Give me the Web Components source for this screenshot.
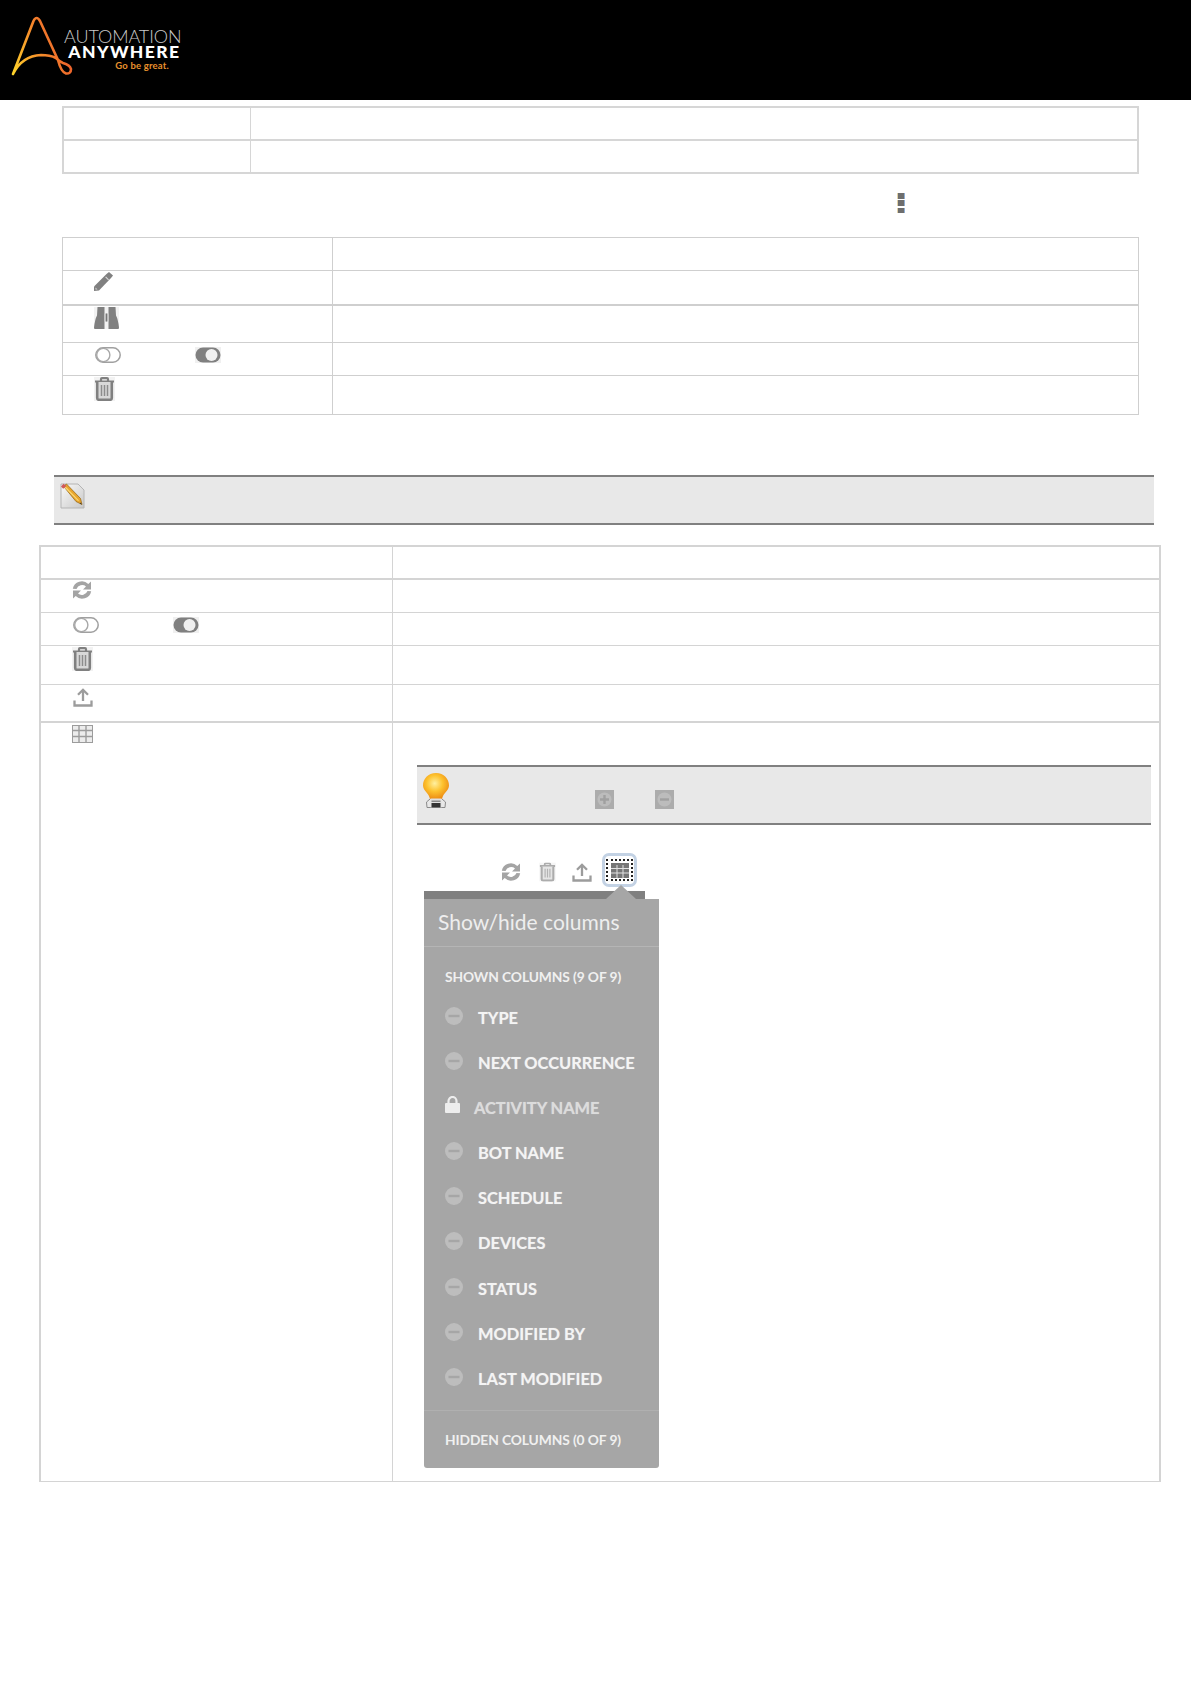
<!DOCTYPE html>
<html>
<head>
<meta charset="utf-8">
<title>Automation Anywhere</title>
<style>
  html, body { margin: 0; background: #fff; }
  body { font-family: Lato, "Liberation Sans", sans-serif; min-height: 1684px; }
</style>
</head>
<body>
<aa-header></aa-header>

<doc-table style="--col:187px;--mt:6px;--ml:62px;--w:1077px;--bw:2px;--bc:#d6d6d6">
  <doc-row h="33" b="2"></doc-row>
  <doc-row h="33" b="2"></doc-row>
</doc-table>

<menu-line></menu-line>

<doc-table style="--col:270px;--mt:0px;--ml:62px;--w:1077px;--bw:1px;--bc:#cfcfcf">
  <doc-row h="33"></doc-row>
  <doc-row h="35" b="2" pt="1"><tool-icon name="pencil"></tool-icon></doc-row>
  <doc-row h="37" pt="1"><tool-icon name="binoculars"></tool-icon></doc-row>
  <doc-row h="33" pt="4" pl="32"><tool-icon name="toggle-off"></tool-icon><tool-icon name="toggle-on"></tool-icon></doc-row>
  <doc-row h="39" pt="1"><tool-icon name="trash"></tool-icon></doc-row>
</doc-table>

<note-bar style="--mt:60px;--ml:54px;--w:1100px;--h:50px"><tool-icon name="note"></tool-icon></note-bar>

<doc-table style="--col:352px;--mt:20px;--ml:39px;--w:1122px;--bw:2px;--bc:#d4d4d4">
  <doc-row h="33" b="2"></doc-row>
  <doc-row h="33"><tool-icon name="refresh"></tool-icon></doc-row>
  <doc-row h="33" pt="4" pl="32"><tool-icon name="toggle-off"></tool-icon><tool-icon name="toggle-on"></tool-icon></doc-row>
  <doc-row h="39" pt="1"><tool-icon name="trash"></tool-icon></doc-row>
  <doc-row h="38" b="2" pt="3" pl="32"><tool-icon name="upload"></tool-icon></doc-row>
  <doc-row h="759" pt="2">
    <tool-icon name="grid"></tool-icon>
    <div slot="detail">
      <note-bar style="--mt:42px;--ml:24px;--w:734px;--h:60px">
        <tool-icon name="bulb"></tool-icon>
        <tool-icon name="plus-box" style="position:absolute;left:178px;top:23px"></tool-icon>
        <tool-icon name="minus-box" style="position:absolute;left:238px;top:23px"></tool-icon>
      </note-bar>
      <column-shot>
        <column-item>TYPE</column-item>
        <column-item>NEXT OCCURRENCE</column-item>
        <column-item locked>ACTIVITY NAME</column-item>
        <column-item>BOT NAME</column-item>
        <column-item>SCHEDULE</column-item>
        <column-item>DEVICES</column-item>
        <column-item>STATUS</column-item>
        <column-item>MODIFIED BY</column-item>
        <column-item>LAST MODIFIED</column-item>
      </column-shot>
    </div>
  </doc-row>
</doc-table>

<script>
// icons, keyed by name, each one carries its own size
const ICONS = {
  pencil: `<svg width="19" height="19" viewBox="0 0 19 19"><path fill="#808080" d="M0 19V14.5L12.5 2 15 0l4 3.5-2 2.5L5 18.5z"/><path fill="#d8d8d8" d="M1.5 17.5v-2l2 2zM12 4.5l3 3-.8.8-3-3z"/></svg>`,
  binoculars: `<svg width="25" height="22" viewBox="0 0 25 22"><rect width="25" height="22" fill="#f2f2f2"/><path fill="#808080" d="M3.5 0H10.5V22H1Q0 22 0 20.5 1 12 3 8.5zM21.5 0H14.5V22H24Q25 22 25 20.5 24 12 22 8.5z"/><rect x="10.5" y="6.5" width="4" height="8" fill="#cfcfcf"/><rect x="11.8" y="6.5" width="1.4" height="8" fill="#777"/></svg>`,
  "toggle-off": `<svg width="26" height="16" viewBox="0 0 26 16"><rect x=".8" y=".8" width="24.4" height="14.4" rx="7.2" fill="#fff" stroke="#a0a0a0" stroke-width="1.5"/><circle cx="8.3" cy="8" r="6.6" fill="#fff" stroke="#a8a8a8" stroke-width="1.4"/></svg>`,
  "toggle-on": `<svg width="26" height="16" viewBox="0 0 26 16"><rect width="26" height="16" fill="#f0f0f0"/><rect x=".5" y=".5" width="25" height="15" rx="7.5" fill="#808080"/><circle cx="16.5" cy="8" r="6" fill="#f0f0f0"/></svg>`,
  trash: `<svg width="21" height="24" viewBox="0 0 21 24"><rect width="21" height="24" fill="#f2f2f2"/><g fill="none" stroke="#808080"><path stroke-width="2.2" d="M1 4.5h19M7 4.5V2.2q0-1 1-1h5q1 0 1 1v2.3"/><path stroke-width="2.6" fill="#d8d8d8" d="M3.2 5v16q0 1.8 1.8 1.8h11q1.8 0 1.8-1.8V5"/><path stroke-width="1.5" stroke="#8c8c8c" d="M7.5 8v11M10.5 8v11M13.5 8v11"/></g></svg>`,
  refresh: `<svg width="20" height="20" viewBox="0 0 20 20"><path fill="#a4a4a4" d="M.8 8.8A9.2 9.2 0 0 1 16.3 4L19 1.5v8H11l3-3A6 6 0 0 0 4.500 9zM19.200 11.200A9.200 9.200 0 0 1 3.700 16L1 18.500v-8H9l-3 3a6 6 0 0 0 9.500-2.500z"/></svg>`,
  upload: `<svg width="20" height="19" viewBox="0 0 20 19"><g fill="none" stroke="#9c9c9c" stroke-width="2.3"><path d="M10 13V2.5M5 6.8 10 1.8l5 5"/><path d="M1.5 12.5v5h17v-5"/></g></svg>`,
  grid: `<svg width="21" height="18" viewBox="0 0 21 18"><rect x=".5" y=".5" width="20" height="17" fill="#ececec" stroke="#9c9c9c"/><path fill="none" stroke="#9c9c9c" stroke-width="1.4" d="M0 5.500h21M0 11.500h21M7 1v17M14 1v17"/></svg>`,
  note: `<svg width="25" height="26" viewBox="0 0 25 26"><defs><linearGradient id="pp" x1="0" y1="0" x2="1" y2="1"><stop offset="0" stop-color="#fafafa"/><stop offset="1" stop-color="#c8c8c8"/></linearGradient></defs><path fill="url(#pp)" stroke="#b4b4b4" d="M1 1h17l6 6v18H1z"/><path fill="#e9a52c" stroke="#8f6212" stroke-width=".7" d="M3.5 3.200 6.500 1 20.500 15.500 22 21.500 16 18.500z"/><path fill="#f9d875" d="M5.500 3.500 19 17.500l-1 .5L4.500 4.500z"/><path fill="#cf5a5a" d="M1 3.500 3.500.8 6.500 3 3.200 5.800z"/><path fill="#333" d="M20.500 19.500l1.500 2-2.300-.9z"/></svg>`,
  bulb: `<svg width="26" height="36" viewBox="0 0 26 36"><defs><radialGradient id="bb" cx=".45" cy=".4" r=".62"><stop offset="0" stop-color="#fff0a0"/><stop offset=".5" stop-color="#fdc22e"/><stop offset="1" stop-color="#ec8a12"/></radialGradient></defs><path fill="none" stroke="#8a8a8a" d="M7 26 3.500 29l.5 5.500h18l.5-5.500L19 26"/><path fill="url(#bb)" d="M13 0C5 0 0 6 0 12.500 0 17.500 6 20 7 26H19C20 20 26 17.500 26 12.500 26 6 21 0 13 0z"/><rect x="7.500" y="25.500" width="11" height="9" fill="#e0e0e0"/><rect x="8.500" y="30" width="9" height="4.500" fill="#333"/><rect x="8.500" y="27.500" width="9" height="1.500" fill="#888"/></svg>`,
  "plus-box": `<svg width="19" height="19" viewBox="0 0 19 19"><rect width="19" height="19" fill="#acacac"/><circle cx="9.500" cy="9.500" r="7" fill="#bcbcbc"/><path stroke="#a0a0a0" stroke-width="2.400" d="M5 9.500h9M9.500 5v9"/></svg>`,
  "minus-box": `<svg width="19" height="19" viewBox="0 0 19 19"><rect width="19" height="19" fill="#acacac"/><circle cx="9.500" cy="9.500" r="7" fill="#bcbcbc"/><path stroke="#a0a0a0" stroke-width="2.400" d="M5 9.500h9"/></svg>`,
  minus: `<svg width="18" height="18" viewBox="0 0 18 18"><circle cx="9" cy="9" r="9" fill="#bdbdbd"/><rect x="3.500" y="7.800" width="11" height="2.400" fill="#a6a6a6"/></svg>`,
  lock: `<svg width="15" height="17" viewBox="0 0 15 17"><path fill="none" stroke="#ededed" stroke-width="2.200" d="M3.500 8V5a4 4 0 0 1 8 0v3"/><rect y="7" width="15" height="10" rx="1" fill="#ededed"/></svg>`
};

class ToolIcon extends HTMLElement {
  connectedCallback() {
    if (this.shadowRoot) return;
    this.attachShadow({ mode: "open" });
    // the reference is an upscaled image, so its icons are soft
    this.shadowRoot.innerHTML = `
      <style>:host { display: block; line-height: 0; } svg { display: block; filter: blur(.4px); }</style>
      ${ICONS[this.getAttribute("name")] || ""}
    `;
  }
}

class AaHeader extends HTMLElement {
  constructor() {
    super();
    this.attachShadow({ mode: "open" });
    this.shadowRoot.innerHTML = `
      <style>
        :host { display: flex; height: 100px; background: #000; box-sizing: border-box; padding: 16px 0 0 11px; }
        svg { display: block; flex: none; }
        .words { width: 115px; margin-left: -9px; padding-top: 12px; text-align: right; }
        .words div { white-space: nowrap; }
        .top { font: 300 18px/17px Lato, sans-serif; color: #c9c9c9; letter-spacing: -.1px; }
        .big { font: 900 17.5px/14px Lato, sans-serif; color: #fff; letter-spacing: 1.4px; margin-right: -1.4px; }
        .tag { font: 700 9.5px/13px Lato, sans-serif; color: #e8912d; padding-right: 10px; letter-spacing: .2px; }
      </style>
      <svg width="62" height="62" viewBox="11 16 62 62">
        <defs><linearGradient id="a" gradientUnits="userSpaceOnUse" x1="13" y1="74" x2="71" y2="50">
          <stop offset="0" stop-color="#fdd32a"/><stop offset=".5" stop-color="#f7902b"/><stop offset="1" stop-color="#e9572b"/>
        </linearGradient></defs>
        <path fill="none" stroke="url(#a)" stroke-width="2.600" stroke-linecap="round" stroke-linejoin="round" d="M13 74 33.500 21Q36.500 15 40 21L58 60Q61 72 66 73.500 71 74 71 69 70 65 63 63 60 62 56 58 50 55 41 55 22 56 13 74"/>
      </svg>
      <div class="words">
        <div class="top">AUTOMATION</div>
        <div class="big">ANYWHERE</div>
        <div class="tag">Go be great.</div>
      </div>
    `;
  }
}

class DocTable extends HTMLElement {
  constructor() {
    super();
    this.attachShadow({ mode: "open" });
    this.shadowRoot.innerHTML = `
      <style>
        :host {
          display: block; box-sizing: border-box;
          margin: var(--mt) 0 0 var(--ml); width: var(--w);
          border: var(--bw) solid var(--bc); border-bottom: 0;
        }
      </style>
      <slot></slot>
    `;
  }
}

class DocRow extends HTMLElement {
  constructor() {
    super();
    this.attachShadow({ mode: "open" });
    this.shadowRoot.innerHTML = `
      <style>
        :host { display: grid; grid-template-columns: var(--col) 1fr; box-sizing: border-box; border-bottom: 1px solid var(--bc); }
        .name { display: flex; gap: 74px; align-items: flex-start; box-sizing: border-box; border-right: 1px solid var(--bc); }
        .detail { min-width: 0; }
      </style>
      <div class="name"><slot></slot></div>
      <div class="detail"><slot name="detail"></slot></div>
    `;
  }
  connectedCallback() {
    this.style.height = this.getAttribute("h") + "px";
    if (this.hasAttribute("b")) this.style.borderBottomWidth = this.getAttribute("b") + "px";
    const name = this.shadowRoot.querySelector(".name");
    name.style.paddingTop = (this.getAttribute("pt") || 0) + "px";
    name.style.paddingLeft = (this.getAttribute("pl") || 31) + "px";
  }
}

class MenuLine extends HTMLElement {
  constructor() {
    super();
    this.attachShadow({ mode: "open" });
    this.shadowRoot.innerHTML = `
      <style>
        :host { display: block; height: 63px; box-sizing: border-box; padding: 19px 0 0 898px; }
        .dots { display: grid; gap: 1.5px; width: 6px; filter: blur(.3px); }
        .dots i { display: block; height: 5.8px; background: #6e6e6e; box-shadow: -1px 0 0 #e2d2a8, 1px 0 0 #8eb0d8; }
      </style>
      <div class="dots"><i></i><i></i><i></i></div>
    `;
  }
}

class NoteBar extends HTMLElement {
  constructor() {
    super();
    this.attachShadow({ mode: "open" });
    this.shadowRoot.innerHTML = `
      <style>
        :host {
          display: block; position: relative; box-sizing: border-box;
          margin: var(--mt) 0 0 var(--ml); width: var(--w); height: var(--h);
          padding: 6px 0 0 6px; background: #e8e8e8;
          border-top: 2px solid #808080; border-bottom: 2px solid #808080;
        }
      </style>
      <slot></slot>
    `;
  }
}

class ColumnItem extends HTMLElement {
  connectedCallback() {
    if (this.shadowRoot) return;
    const locked = this.hasAttribute("locked");
    this.attachShadow({ mode: "open" });
    this.shadowRoot.innerHTML = `
      <style>
        :host { display: flex; height: 45.1px; box-sizing: border-box; padding-left: 21px; }
        .ico { flex: none; width: ${locked ? 29 : 33}px; padding-top: ${locked ? 11 : 12}px; }
        svg { display: block; }
        .txt {
          font: 700 16.4px/45px Lato, sans-serif; color: ${locked ? "#dcdcdc" : "#f4f4f4"}; white-space: nowrap;
          text-shadow: 0 0 1px rgba(255,255,255,.45);
        }
      </style>
      <div class="ico">${locked ? ICONS.lock : ICONS.minus}</div>
      <div class="txt"><slot></slot></div>
    `;
  }
}

class ColumnShot extends HTMLElement {
  constructor() {
    super();
    this.attachShadow({ mode: "open" });
    this.shadowRoot.innerHTML = `
      <style>
        :host { display: block; width: 235px; margin: 28px 0 0 31px; position: relative; }
        .tools { display: flex; align-items: center; height: 38px; padding-left: 77px; box-sizing: border-box; }
        .tools tool-icon { flex: none; }
        .ring {
          width: 35px; height: 34px; margin-left: 10px; box-sizing: border-box; flex: none; align-self: flex-start;
          border: 3px solid #c3d2e4; border-radius: 7px; padding: 3px 1px;
        }
        .dotted { height: 100%; box-sizing: border-box; border: 2px dotted #222; display: flex; align-items: center; justify-content: center; }
        .dotted svg { display: block; filter: blur(.3px); }
        .strip { width: 221px; height: 8px; background: #808080; }
        .arrow {
          position: absolute; left: 182px; top: 32px; width: 0; height: 0;
          border-left: 15px solid transparent; border-right: 15px solid transparent; border-bottom: 14px solid #a6a6a6;
        }
        .panel { background: #a6a6a6; border-radius: 0 0 3px 3px; height: 569px; color: #f4f4f4; }
        .title { height: 48px; box-sizing: border-box; padding-left: 14px; font: 400 21px/46px Lato, sans-serif; color: #eee; border-bottom: 1px solid #b5b5b5; white-space: nowrap; }
        h4 { margin: 0; padding-left: 21px; font: 700 13.8px/20px Lato, sans-serif; color: #f0f0f0; white-space: nowrap; letter-spacing: -.1px; }
        .shown { padding-top: 20px; }
        .list { margin-top: 8px; padding-bottom: 9px; border-bottom: 1px solid #b0b0b0; }
        .hidden { padding-top: 19px; }
      </style>
      <div class="tools">
        <tool-icon name="refresh"></tool-icon>
        <tool-icon name="trash" style="margin-left:16px;transform:scale(.8);opacity:.65"></tool-icon>
        <tool-icon name="upload" style="margin-left:14px"></tool-icon>
        <div class="ring"><div class="dotted">
          <svg width="18" height="15" viewBox="0 0 18 15"><rect width="18" height="15" fill="#777"/><path stroke="#e2e2e2" d="M0 5.500h18M0 10h18M6 2v13M12 2v13"/></svg>
        </div></div>
      </div>
      <div class="strip"></div>
      <div class="arrow"></div>
      <div class="panel">
        <div class="title">Show/hide columns</div>
        <h4 class="shown">SHOWN COLUMNS (9 OF 9)</h4>
        <div class="list"><slot></slot></div>
        <h4 class="hidden">HIDDEN COLUMNS (0 OF 9)</h4>
      </div>
    `;
  }
}

customElements.define("tool-icon", ToolIcon);
customElements.define("aa-header", AaHeader);
customElements.define("doc-table", DocTable);
customElements.define("doc-row", DocRow);
customElements.define("menu-line", MenuLine);
customElements.define("note-bar", NoteBar);
customElements.define("column-item", ColumnItem);
customElements.define("column-shot", ColumnShot);
</script>
</body>
</html>
